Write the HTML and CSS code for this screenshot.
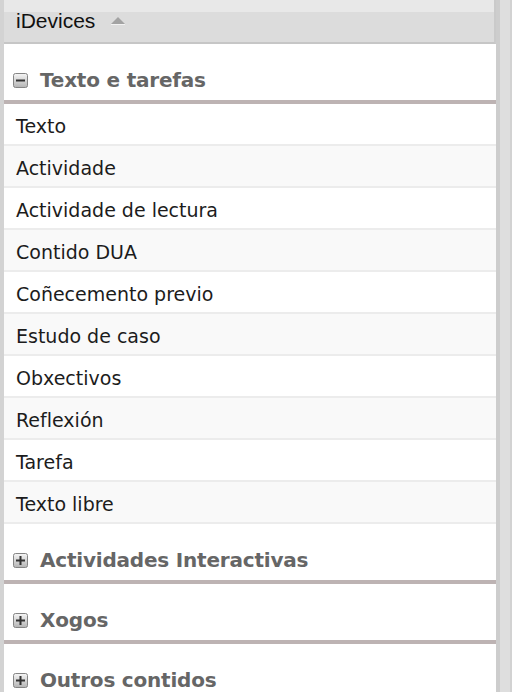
FILE: index.html
```html
<!DOCTYPE html>
<html lang="gl">
<head>
<meta charset="utf-8">
<title>iDevices</title>
<link rel="stylesheet" href="styles.css">
</head>
<body>
<div class="frame">
  <div class="panel">
    <div class="panel-head">
      <span class="panel-title">iDevices</span>
      <span class="sort-arrow"></span>
    </div>

    <div class="group">
      <div class="group-head">
        <svg class="toggle" width="15" height="15" viewBox="0 0 15 15" aria-hidden="true">
          <defs>
            <linearGradient id="gm" x1="0" y1="0" x2="0" y2="1">
              <stop offset="0" stop-color="#f6f6f6"/>
              <stop offset="1" stop-color="#b4b4b4"/>
            </linearGradient>
          </defs>
          <rect x="0.5" y="0.5" width="14" height="14" rx="2" fill="url(#gm)" stroke="#858585"/>
          <rect x="3" y="6.5" width="9" height="2" fill="#333333"/>
        </svg>
        <span class="group-name">Texto e tarefas</span>
      </div>
      <ul class="items">
        <li>Texto</li>
        <li>Actividade</li>
        <li>Actividade de lectura</li>
        <li>Contido DUA</li>
        <li>Coñecemento previo</li>
        <li>Estudo de caso</li>
        <li>Obxectivos</li>
        <li>Reflexión</li>
        <li>Tarefa</li>
        <li>Texto libre</li>
      </ul>
    </div>

    <div class="group">
      <div class="group-head">
        <svg class="toggle" width="15" height="15" viewBox="0 0 15 15" aria-hidden="true">
          <defs>
            <linearGradient id="gp1" x1="0" y1="0" x2="0" y2="1">
              <stop offset="0" stop-color="#f6f6f6"/>
              <stop offset="1" stop-color="#b4b4b4"/>
            </linearGradient>
          </defs>
          <rect x="0.5" y="0.5" width="14" height="14" rx="2" fill="url(#gp1)" stroke="#858585"/>
          <rect x="3" y="6.5" width="9" height="2" fill="#333333"/>
          <rect x="6.5" y="3" width="2" height="9" fill="#333333"/>
        </svg>
        <span class="group-name">Actividades Interactivas</span>
      </div>
    </div>

    <div class="group">
      <div class="group-head">
        <svg class="toggle" width="15" height="15" viewBox="0 0 15 15" aria-hidden="true">
          <defs>
            <linearGradient id="gp2" x1="0" y1="0" x2="0" y2="1">
              <stop offset="0" stop-color="#f6f6f6"/>
              <stop offset="1" stop-color="#b4b4b4"/>
            </linearGradient>
          </defs>
          <rect x="0.5" y="0.5" width="14" height="14" rx="2" fill="url(#gp2)" stroke="#858585"/>
          <rect x="3" y="6.5" width="9" height="2" fill="#333333"/>
          <rect x="6.5" y="3" width="2" height="9" fill="#333333"/>
        </svg>
        <span class="group-name">Xogos</span>
      </div>
    </div>

    <div class="group">
      <div class="group-head">
        <svg class="toggle" width="15" height="15" viewBox="0 0 15 15" aria-hidden="true">
          <defs>
            <linearGradient id="gp3" x1="0" y1="0" x2="0" y2="1">
              <stop offset="0" stop-color="#f6f6f6"/>
              <stop offset="1" stop-color="#b4b4b4"/>
            </linearGradient>
          </defs>
          <rect x="0.5" y="0.5" width="14" height="14" rx="2" fill="url(#gp3)" stroke="#858585"/>
          <rect x="3" y="6.5" width="9" height="2" fill="#333333"/>
          <rect x="6.5" y="3" width="2" height="9" fill="#333333"/>
        </svg>
        <span class="group-name">Outros contidos</span>
      </div>
    </div>
  </div>
  <div class="scroll-track"></div>
</div>
</body>
</html>
```

FILE: styles.css
```css
html, body {
  margin: 0;
  padding: 0;
  background: #ffffff;
  height: 100%;
  overflow: hidden;
}

body {
  font-family: "DejaVu Sans", sans-serif;
}

.frame {
  display: flex;
  width: 512px;
  height: 692px;
}

.panel {
  width: 492px;
  border-left: 4px solid #d3d3d3;
  background: #ffffff;
  display: flex;
  flex-direction: column;
  overflow: hidden;
}

.panel-head {
  flex: none;
  height: 42px;
  border-bottom: 2px solid #c6c6c6;
  border-right: 2px solid #cacaca;
  background: linear-gradient(to bottom, #e8e8e8 0, #e8e8e8 12px, #dcdcdc 12px, #dcdcdc 100%);
  display: flex;
  align-items: center;
  padding-left: 12px;
  gap: 16px;
}

.panel-title {
  font-family: "Liberation Sans", Arial, sans-serif;
  font-size: 21px;
  color: #111111;
  line-height: 1;
  margin-top: -1px;
}

.sort-arrow {
  width: 0;
  height: 0;
  border-left: 7px solid transparent;
  border-right: 7px solid transparent;
  border-bottom: 7px solid #a3a3a3;
  margin-top: -1px;
  box-shadow: 0 1px 0 #f2f2f2;
}

.group-head {
  flex: none;
  height: 60px;
  box-sizing: border-box;
  padding: 25px 8px 9px 9px;
  display: flex;
  align-items: center;
  gap: 12px;
  border-bottom: 4px solid #bdb3b3;
}

.toggle {
  flex: none;
  display: block;
}

.group-name {
  font-weight: bold;
  font-size: 20px;
  line-height: 22px;
  letter-spacing: -0.2px;
  color: #666666;
}

.items {
  list-style: none;
  margin: 0;
  padding: 0;
}

.items li {
  height: 40px;
  line-height: 44px;
  overflow: hidden;
  padding-left: 12px;
  font-size: 19px;
  color: #1c1c1c;
  border-bottom: 2px solid #ececec;
  background: #ffffff;
}

.items li:nth-child(even) {
  background: #f9f9f9;
}

.scroll-track {
  width: 10px;
  border-left: 4px solid #cdcdcd;
  border-right: 2px solid #d2d2d2;
  background: #dedede;
}
```
